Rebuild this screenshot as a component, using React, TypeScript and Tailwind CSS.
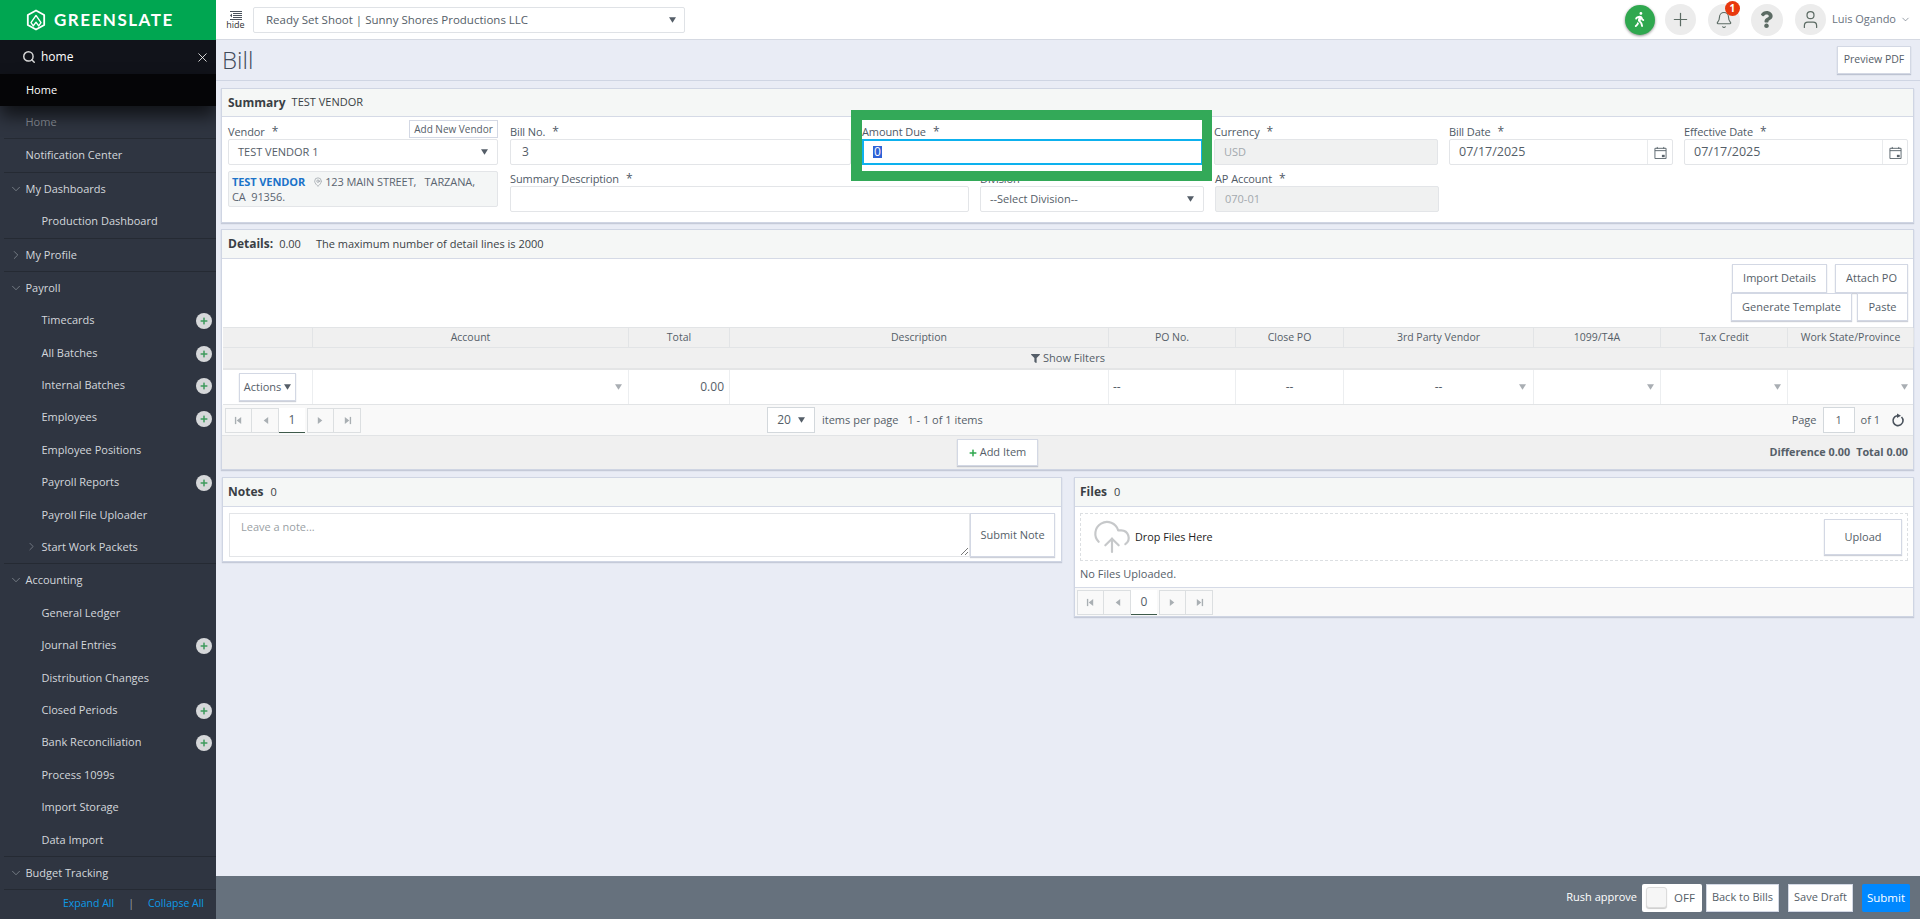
import React from 'react';
import { Search, X, ChevronDown, ChevronRight, Plus, Bell, User, MapPin, CloudUpload } from 'lucide-react';
import { FaWalking, FaQuestion, FaFilter, FaPlus } from 'react-icons/fa';

interface NavItem {
  label: string;
  add?: boolean;
  caret?: boolean;
}

interface NavSection {
  label: string;
  open?: boolean;
  closed?: boolean;
  dim?: boolean;
  items?: NavItem[];
}

const sections: NavSection[] = [
  { label: 'Home', dim: true },
  { label: 'Notification Center' },
  { label: 'My Dashboards', open: true, items: [{ label: 'Production Dashboard' }] },
  { label: 'My Profile', closed: true },
  {
    label: 'Payroll',
    open: true,
    items: [
      { label: 'Timecards', add: true },
      { label: 'All Batches', add: true },
      { label: 'Internal Batches', add: true },
      { label: 'Employees', add: true },
      { label: 'Employee Positions' },
      { label: 'Payroll Reports', add: true },
      { label: 'Payroll File Uploader' },
      { label: 'Start Work Packets', caret: true },
    ],
  },
  {
    label: 'Accounting',
    open: true,
    items: [
      { label: 'General Ledger' },
      { label: 'Journal Entries', add: true },
      { label: 'Distribution Changes' },
      { label: 'Closed Periods', add: true },
      { label: 'Bank Reconciliation', add: true },
      { label: 'Process 1099s' },
      { label: 'Import Storage' },
      { label: 'Data Import' },
    ],
  },
  { label: 'Budget Tracking', open: true },
];

const columns = ['', 'Account', 'Total', 'Description', 'PO No.', 'Close PO', '3rd Party Vendor', '1099/T4A', 'Tax Credit', 'Work State/Province'];
const gridCols = 'grid grid-cols-[90px_316px_101px_379px_127px_108px_190px_127px_127px_126px]';

const Caret = ({ className = 'text-[#555e68]' }: { className?: string }) => (
  <svg viewBox="0 0 10 8" className={`w-[7px] h-[6px] fill-current ${className}`}>
    <path d="M0 0h10L5 8z" />
  </svg>
);

const Logo = () => (
  <svg viewBox="0 0 22 24" className="w-[20px] h-[22px] text-white" fill="none" stroke="currentColor" strokeWidth="2" strokeLinejoin="round">
    <path d="M11 1.500 20 6.500V17.500L11 22.500 2 17.500V6.500z" />
    <path d="M5.500 15 11 7l5.500 8-2.500 3.500-3-4-3 4z" strokeWidth="1.500" />
  </svg>
);

const Calendar = () => (
  <svg viewBox="0 0 14 14" className="w-[13px] h-[13px] text-[#59636b]" fill="none" stroke="currentColor">
    <path d="M1 2.500h12v11H1zM1 5h12M3.500 1v2M10.500 1v2" />
    <rect x="8.500" y="9.500" width="3" height="2.500" fill="currentColor" stroke="none" />
  </svg>
);

const Refresh = () => (
  <svg viewBox="0 0 14 14" className="ml-[11px] w-[14px] h-[14px] text-[#4a525c]" fill="none" stroke="currentColor" strokeWidth="1.600">
    <path d="M6 2.700a5 5 0 1 0 4.500 1.300" />
    <path d="M6 0.500 10 2.700 6 5z" fill="currentColor" stroke="none" />
  </svg>
);

const Step = ({ dir, end }: { dir: 'left' | 'right'; end?: boolean }) => (
  <svg viewBox="0 0 10 10" className="w-[9px] h-[9px] fill-[#a9afb3]">
    {dir === 'left' ? <path d="M8 1v8L3 5z" /> : <path d="M2 1v8l5-4z" />}
    {end && (dir === 'left' ? <rect x="1" y="1" width="1.500" height="8" /> : <rect x="7.500" y="1" width="1.500" height="8" />)}
  </svg>
);

const Pager = ({ page }: { page: string }) => (
  <div className="flex items-center h-[25px]">
    <div className="w-[27px] h-full flex items-center justify-center border border-[#dcdfe1]"><Step dir="left" end /></div>
    <div className="w-[27px] h-full flex items-center justify-center border border-l-0 border-[#dcdfe1]"><Step dir="left" /></div>
    <div className="w-[26px] h-full flex items-center justify-center bg-white border-b border-[#3e5a4b] text-[12px]">{page}</div>
    <div className="w-[27px] h-full ml-[2px] flex items-center justify-center border border-[#dcdfe1]"><Step dir="right" /></div>
    <div className="w-[27px] h-full flex items-center justify-center border border-l-0 border-[#dcdfe1]"><Step dir="right" end /></div>
  </div>
);

const Label = ({ text }: { text: string }) => (
  <div className="h-[16px] pt-[2px] flex items-center text-[11px] tracking-[-0.1px] text-[#4f5a66] whitespace-nowrap">
    {text}<span className="ml-[7px] text-[12px]">*</span>
  </div>
);

const Btn = ({ children, className = '' }: { children: React.ReactNode; className?: string }) => (
  <div className={`flex items-center justify-center bg-white border border-[#d3d8e4] shadow-[0_1px_1px_rgba(90,100,130,0.3)] text-[11px] text-[#555e68] whitespace-nowrap ${className}`}>
    {children}
  </div>
);

const inputBox = 'h-[26px] flex items-center border border-[#e3e5e8] rounded-[2px] bg-white text-[11px] text-[#555e68]';
const readonlyBox = 'h-[26px] flex items-center border border-[#e3e5e8] rounded-[2px] bg-[#f0f1f1] text-[11px] text-[#a3a9ae] pl-[9px]';

const Sidebar = () => (
  <aside className="w-[216px] shrink-0 h-full flex flex-col bg-[#2f3541] text-[11px] text-[#d3d7dc] overflow-hidden">
    <div className="h-[40px] shrink-0 bg-[#00a651] flex items-center pl-[26px] gap-[8px]">
      <Logo />
      <span className="text-[17px] font-bold tracking-[1.500px] text-white font-['Lato',sans-serif]">GREENSLATE</span>
    </div>
    <div className="h-[34px] shrink-0 bg-[#11131a] flex items-center pl-[22px] pr-[6px] text-white text-[12px]">
      <Search className="w-[14px] h-[14px] text-[#d8d8d8]" strokeWidth={2.500} />
      <span className="ml-[5px] flex-1">home</span>
      <X className="w-[15px] h-[15px]" strokeWidth={1.300} />
    </div>
    <div className="relative z-10 h-[32px] shrink-0 bg-[#050507] flex items-center pl-[26px] text-white shadow-[0_10px_18px_rgba(0,0,0,0.65)]">Home</div>
    <nav className="flex-1 min-h-0">
      {sections.map((s) => (
        <div key={s.label} className="ml-[4px] border-b border-[#252a33]">
          <div className={`relative h-[32.400px] flex items-center pl-[21.500px] ${s.dim ? 'text-[#8b9099]' : ''}`}>
            {s.open && <ChevronDown className="absolute left-[5px] top-[9px] w-[14px] h-[14px] text-[#a4aab2]" strokeWidth={1} />}
            {s.closed && <ChevronRight className="absolute left-[5px] top-[9px] w-[14px] h-[14px] text-[#a4aab2]" strokeWidth={1} />}
            {s.label}
          </div>
          {s.items?.map((item) => (
            <div key={item.label} className="relative h-[32.400px] flex items-center pl-[37.500px]">
              {item.caret && <ChevronRight className="absolute left-[21px] top-[9px] w-[13px] h-[13px] text-[#a4aab2]" strokeWidth={1} />}
              {item.label}
              {item.add && (
                <span className="absolute left-[192px] top-[9px] w-[16px] h-[16px] rounded-full bg-[#d6d8da] flex items-center justify-center">
                  <FaPlus className="w-[8px] h-[8px] text-[#3d9a5c]" />
                </span>
              )}
            </div>
          ))}
        </div>
      ))}
    </nav>
    <div className="h-[30px] shrink-0 flex items-center justify-end pr-[12px] text-[10.500px] text-[#0d9be8]">
      <span>Expand All</span>
      <span className="mx-[14px] text-[#9aa0a8]">|</span>
      <span>Collapse All</span>
    </div>
  </aside>
);

const Topbar = () => (
  <header className="h-[40px] shrink-0 bg-white border-b border-[#d5d9e2] flex items-center text-[#555e68]">
    <div className="w-[37px] flex flex-col items-center pl-[2px] leading-none">
      <svg viewBox="0 0 12 9" className="w-[12px] h-[9px] text-[#4a525c]" fill="none" stroke="currentColor">
        <path d="M0 .5h12M3 2.500h9M3 4.500h9M3 6.500h9M0 8.500h12" />
        <path d="M2 2.500v4L0 4.500z" fill="currentColor" stroke="none" />
      </svg>
      <span className="text-[9px] text-[#333]">hide</span>
    </div>
    <div className="w-[432px] h-[26px] border border-[#dfe2e6] rounded-[2px] flex items-center pl-[12px] pr-[8px] text-[11.500px]">
      <span className="flex-1">Ready Set Shoot | Sunny Shores Productions LLC</span>
      <Caret />
    </div>
    <div className="ml-auto flex items-center pr-[9px]">
      <span className="w-[30px] h-[30px] rounded-full bg-[#2fa84f] shadow-[0_1px_3px_rgba(0,0,0,0.45)] flex items-center justify-center">
        <FaWalking className="w-[15px] h-[15px] text-white" />
      </span>
      <span className="ml-[10px] w-[31px] h-[31px] rounded-full bg-[#ececec] flex items-center justify-center">
        <Plus className="w-[21px] h-[21px] text-[#5c6b64]" strokeWidth={1.400} />
      </span>
      <span className="relative ml-[12px] w-[32px] h-[32px] rounded-full bg-[#ececec] flex items-center justify-center">
        <Bell className="w-[18px] h-[18px] text-[#5c6b64]" strokeWidth={1.500} />
        <span className="absolute -top-[3px] right-0 w-[15px] h-[15px] rounded-full bg-[#e8380d] text-white text-[10px] font-bold flex items-center justify-center">1</span>
      </span>
      <span className="ml-[11px] w-[32px] h-[32px] rounded-full bg-[#ececec] flex items-center justify-center">
        <FaQuestion className="w-[17px] h-[17px] text-[#5c6b64]" />
      </span>
      <span className="ml-[12px] w-[31px] h-[31px] rounded-full bg-[#ececec] flex items-center justify-center">
        <User className="w-[21px] h-[21px] text-[#5c6b64]" strokeWidth={1.400} />
      </span>
      <span className="ml-[6px] text-[11px] text-[#6a7480]">Luis Ogando</span>
      <ChevronDown className="ml-[4px] w-[11px] h-[11px] text-[#6a7480]" strokeWidth={1.500} />
    </div>
  </header>
);

const Summary = () => (
  <section className="h-[135px] bg-white border border-[#cfd5e3] shadow-[0_1px_1px_rgba(90,100,130,0.25)]">
    <div className="h-[28px] bg-[#f5f7f6] border-b border-[#d5dae6] flex items-center pl-[6px] text-[12px] text-[#3a3f45]">
      <span className="font-bold">Summary</span>
      <span className="ml-[6px] text-[11px]">TEST VENDOR</span>
    </div>
    <div className="flex pl-[6px] pt-[6px]">
      <div className="w-[270px] shrink-0">
        <div className="flex items-end justify-between h-[16px]">
          <Label text="Vendor" />
          <div className="h-[18px] w-[89px] flex items-center justify-center border border-[#d3d8e4] text-[10px] text-[#555e68] bg-white mb-[1px]">Add New Vendor</div>
        </div>
        <div className={`${inputBox} pl-[9px] pr-[9px] justify-between`}>TEST VENDOR 1<Caret /></div>
        <div className="mt-[6px] h-[36px] bg-[#f4f6f6] border border-[#e3e5e8] rounded-[2px] pl-[3px] text-[11px] tracking-[-0.1px] leading-[15px] pt-[2px] text-[#5a6470]">
          <div className="flex items-center whitespace-nowrap">
            <span className="font-bold text-[#1b73c9]">TEST VENDOR</span>
            <MapPin className="w-[10px] h-[10px] ml-[8px] mr-[2px]" strokeWidth={1} />
            <span>123 MAIN STREET, &nbsp; TARZANA,</span>
          </div>
          <div>CA&nbsp; 91356.</div>
        </div>
      </div>
      <div className="ml-[12px] w-[1398px]">
        <div className="flex gap-[11px]">
          <div className="w-[341px]">
            <Label text="Bill No." />
            <div className={`${inputBox} pl-[11px] text-[12px]`}>3</div>
          </div>
          <div className="relative w-[341px]">
            <Label text="Amount Due" />
            <div className="h-[26px] flex items-center border-2 border-[#0db1ee] bg-white pl-[9px] text-[12px] leading-none">
              <span className="bg-[#2f62d6] text-white px-px">0</span>
            </div>
            <div className="absolute -left-[11px] -right-[9px] -top-[13px] h-[71px] border-[10px] border-l-[11px] border-[#33a958] pointer-events-none" />
          </div>
          <div className="w-[224px]">
            <Label text="Currency" />
            <div className={readonlyBox}>USD</div>
          </div>
          <div className="w-[224px]">
            <Label text="Bill Date" />
            <div className={`${inputBox} pl-[9px] text-[12.500px]`}>
              <span className="flex-1">07/17/2025</span>
              <span className="w-[25px] h-full border-l border-[#e9ebed] flex items-center justify-center"><Calendar /></span>
            </div>
          </div>
          <div className="w-[224px]">
            <Label text="Effective Date" />
            <div className={`${inputBox} pl-[9px] text-[12.500px]`}>
              <span className="flex-1">07/17/2025</span>
              <span className="w-[25px] h-full border-l border-[#e9ebed] flex items-center justify-center"><Calendar /></span>
            </div>
          </div>
        </div>
        <div className="flex gap-[11px] mt-[5px]">
          <div className="w-[459px]">
            <Label text="Summary Description" />
            <div className={inputBox} />
          </div>
          <div className="w-[224px]">
            <Label text="Division" />
            <div className={`${inputBox} pl-[9px] pr-[9px] justify-between`}>--Select Division--<Caret /></div>
          </div>
          <div className="w-[224px]">
            <Label text="AP Account" />
            <div className={readonlyBox}>070-01</div>
          </div>
        </div>
      </div>
    </div>
  </section>
);

const Details = () => (
  <section className="mt-[6px] h-[241px] bg-white border border-[#cfd5e3] shadow-[0_1px_1px_rgba(90,100,130,0.25)]">
    <div className="h-[29px] bg-[#f5f7f6] border-b border-[#d5dae6] flex items-center pl-[6px] text-[11px] text-[#3a3f45]">
      <span className="font-bold text-[12px]">Details:</span>
      <span className="ml-[6px]">0.00</span>
      <span className="ml-[15px]">The maximum number of detail lines is 2000</span>
    </div>
    <div className="h-[68px] pt-[5px] pr-[5px] flex flex-col items-end">
      <div className="flex gap-[8px]">
        <Btn className="w-[95px] h-[29px]">Import Details</Btn>
        <Btn className="w-[73px] h-[29px]">Attach PO</Btn>
      </div>
      <div className="flex gap-[5px]">
        <Btn className="w-[121px] h-[28px]">Generate Template</Btn>
        <Btn className="w-[51px] h-[28px]">Paste</Btn>
      </div>
    </div>
    <div className={`${gridCols} ml-[1px] h-[21px] bg-[#f0f0f0] border-y border-[#e2e4e6] text-[10.500px] text-[#555e68]`}>
      {columns.map((c, i) => (
        <div key={i} className="flex items-center justify-center border-r border-[#e2e4e6] whitespace-nowrap">{c}</div>
      ))}
    </div>
    <div className="ml-[1px] h-[22px] bg-[#f0f0f0] border-b-2 border-[#e4e5e6] flex items-center justify-center text-[11px] text-[#555e68]">
      <FaFilter className="w-[9px] h-[9px] mr-[3px]" />Show Filters
    </div>
    <div className={`${gridCols} ml-[1px] h-[35px] border-b border-[#e2e4e6] text-[12px] text-[#555e68]`}>
      <div className="flex items-center justify-center border-r border-[#eceef0]">
        <Btn className="w-[57px] h-[28px] gap-[3px]">Actions<Caret /></Btn>
      </div>
      <div className="flex items-center justify-end pr-[6px] border-r border-[#eceef0]"><Caret className="text-[#a9aeb3]" /></div>
      <div className="flex items-center justify-end pr-[5px] border-r border-[#eceef0]">0.00</div>
      <div className="border-r border-[#eceef0]" />
      <div className="flex items-center pl-[4px] border-r border-[#eceef0]">--</div>
      <div className="flex items-center justify-center border-r border-[#eceef0]">--</div>
      <div className="relative flex items-center justify-center border-r border-[#eceef0]">--<span className="absolute right-[7px] top-[14px] flex"><Caret className="text-[#a9aeb3]" /></span></div>
      <div className="flex items-center justify-end pr-[6px] border-r border-[#eceef0]"><Caret className="text-[#a9aeb3]" /></div>
      <div className="flex items-center justify-end pr-[6px] border-r border-[#eceef0]"><Caret className="text-[#a9aeb3]" /></div>
      <div className="flex items-center justify-end pr-[6px]"><Caret className="text-[#a9aeb3]" /></div>
    </div>
    <div className="h-[31px] bg-[#f9f9f9] border-b border-[#e2e4e6] flex items-center pl-[3px] pr-[8px] text-[11px] text-[#555e68]">
      <Pager page="1" />
      <div className="ml-[406px] w-[48px] h-[26px] bg-white border border-[#d3d8dc] flex items-center justify-center gap-[7px] text-[12px]">20<Caret /></div>
      <span className="ml-[7px]">items per page</span>
      <span className="ml-[9px]">1 - 1 of 1 items</span>
      <span className="ml-auto">Page</span>
      <div className="ml-[6px] w-[32px] h-[26px] bg-white border border-[#d3d8dc] flex items-center justify-center">1</div>
      <span className="ml-[6px]">of 1</span>
      <Refresh />
    </div>
    <div className="h-[33px] bg-[#f0f0f0] flex items-center pr-[5px] text-[10.800px] font-bold text-[#555e68]">
      <Btn className="ml-[735px] w-[81px] h-[27px] font-normal gap-[3px]"><FaPlus className="w-[8px] h-[8px] text-[#2fa84f]" />Add Item</Btn>
      <span className="ml-auto">Difference 0.00</span>
      <span className="ml-[6px]">Total 0.00</span>
    </div>
  </section>
);

const Notes = () => (
  <section className="w-[840px] h-[85px] bg-white border border-[#cfd5e3] shadow-[0_1px_1px_rgba(90,100,130,0.25)]">
    <div className="h-[29px] bg-[#f5f7f6] border-b border-[#d5dae6] flex items-center pl-[5px] text-[12px] text-[#3a3f45]">
      <span className="font-bold">Notes</span><span className="ml-[7px] text-[11px]">0</span>
    </div>
    <div className="flex mt-[6px] mx-[6px] h-[44px]">
      <div className="relative w-[742px] border border-[#e3e5e8] pl-[11px] pt-[5px] text-[11px] text-[#9a9fa5]">
        Leave a note...
        <svg viewBox="0 0 8 8" className="absolute right-[1px] bottom-[1px] w-[8px] h-[8px] text-[#555]" fill="none" stroke="currentColor" strokeWidth="0.800">
          <path d="M1 8 8 1M5 8 8 5" />
        </svg>
      </div>
      <Btn className="w-[85px]">Submit Note</Btn>
    </div>
  </section>
);

const Files = () => (
  <section className="ml-[12px] w-[841px] h-[140px] bg-white border border-[#cfd5e3] shadow-[0_1px_1px_rgba(90,100,130,0.25)]">
    <div className="h-[29px] bg-[#f5f7f6] border-b border-[#d5dae6] flex items-center pl-[5px] text-[12px] text-[#3a3f45]">
      <span className="font-bold">Files</span><span className="ml-[7px] text-[11px]">0</span>
    </div>
    <div className="mt-[6px] mx-[5px] h-[48px] border border-dashed border-[#dcdfe2] flex items-center pl-[11px] pr-[5px]">
      <CloudUpload className="w-[40px] h-[40px] text-[#c6c8ca]" strokeWidth={1.300} />
      <span className="text-[10.800px] text-[#222] ml-[3px]">Drop Files Here</span>
      <Btn className="ml-auto w-[78px] h-[36px]">Upload</Btn>
    </div>
    <div className="h-[26px] pl-[5px] flex items-center text-[11px] text-[#555e68]">No Files Uploaded.</div>
    <div className="h-[29px] bg-[#f9f9f9] border-t border-[#d5dae6] flex items-center pl-[2px] text-[#555e68]">
      <Pager page="0" />
    </div>
  </section>
);

const Footer = () => (
  <footer className="h-[43px] shrink-0 bg-[#66717d] flex items-center justify-end pr-[10px] text-[11.500px]">
    <span className="text-white text-[11px] mr-[5px]">Rush approve</span>
    <div className="w-[60px] h-[28px] bg-white rounded-[2px] flex items-center pl-[4px] mr-[4px]">
      <span className="w-[21px] h-[21px] bg-[#f6f6f6] border border-[#dcdcdc] rounded-[3px] shadow-[0_1px_1px_rgba(0,0,0,0.2)]" />
      <span className="ml-[7px] text-[#555e68]">OFF</span>
    </div>
    <Btn className="w-[73px] h-[28px] mr-[9px] text-[11.500px]">Back to Bills</Btn>
    <Btn className="w-[65px] h-[28px] mr-[9px] text-[11.500px]">Save Draft</Btn>
    <div className="w-[48px] h-[28px] bg-[#0088ff] rounded-[2px] text-white flex items-center justify-center">Submit</div>
  </footer>
);

export default function App() {
  return (
    <div className="h-screen w-full flex overflow-hidden font-['Open_Sans',sans-serif] bg-[#e9ecf5]">
      <Sidebar />
      <div className="flex-1 min-w-0 flex flex-col">
        <Topbar />
        <main className="flex-1 min-h-0 overflow-hidden">
          <div className="h-[41px] border-b border-[#cfd5e3] flex items-center justify-between pl-[6px] pr-[9px]">
            <h1 className="text-[24px] font-light text-[#3f4a5a] leading-none">Bill</h1>
            <Btn className="w-[74px] h-[28px] !text-[10.500px]">Preview PDF</Btn>
          </div>
          <div className="pl-[5px] pr-[6px] pt-[7px]">
            <Summary />
            <Details />
            <div className="flex items-start mt-[7px] ml-[1px]">
              <Notes />
              <Files />
            </div>
          </div>
        </main>
        <Footer />
      </div>
    </div>
  );
}
